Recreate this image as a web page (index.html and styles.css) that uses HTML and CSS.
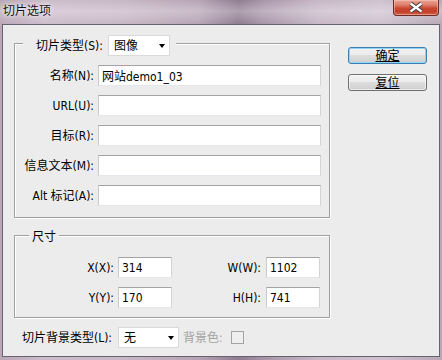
FILE: index.html
```html
<!DOCTYPE html>
<html lang="zh-CN">
<head>
<meta charset="utf-8">
<title>切片选项</title>
<link rel="stylesheet" href="styles.css">
</head>
<body>
<div class="window">
  <div class="titlebar">
    <span class="title">切片选项</span>
    <div class="close">
      <svg width="44" height="15" viewBox="0 0 44 15">
        <path d="M16.5 3.5 L27.5 11.5 M27.5 3.5 L16.5 11.5" stroke="#3b3b44" stroke-width="4.2" fill="none"/>
        <path d="M16.5 3.5 L27.5 11.5 M27.5 3.5 L16.5 11.5" stroke="#ffffff" stroke-width="2.2" fill="none"/>
      </svg>
    </div>
  </div>
  <div class="client">
    <div class="main">
      <div class="group group-slice">
        <div class="legend legend-slice">
          <span>切片类型(S):</span>
          <div class="select sel-type"><span>图像</span><i class="arrow"></i></div>
        </div>
        <div class="form-grid">
          <label class="lbl">名称(N):</label><input class="input" type="text" value="网站demo1_03">
          <label class="lbl">URL(U):</label><input class="input" type="text" value="">
          <label class="lbl">目标(R):</label><input class="input" type="text" value="">
          <label class="lbl">信息文本(M):</label><input class="input" type="text" value="">
          <label class="lbl">Alt 标记(A):</label><input class="input" type="text" value="">
        </div>
      </div>
      <div class="group group-size">
        <div class="legend legend-size">尺寸</div>
        <div class="size-grid">
          <label class="lbl">X(X):</label><input class="input" type="text" value="314">
          <label class="lbl lbl-b">W(W):</label><input class="input" type="text" value="1102">
          <label class="lbl">Y(Y):</label><input class="input" type="text" value="170">
          <label class="lbl lbl-b">H(H):</label><input class="input" type="text" value="741">
        </div>
      </div>
      <div class="bg-row">
        <span class="bg-label">切片背景类型(L):</span>
        <div class="select sel-bg"><span>无</span><i class="arrow"></i></div>
        <span class="disabled">背景色:</span>
        <span class="swatch"></span>
      </div>
    </div>
    <div class="buttons">
      <button class="btn btn-default" type="button">确定</button>
      <button class="btn" type="button">复位</button>
    </div>
  </div>
</div>
</body>
</html>
```
FILE: styles.css
```css
* { box-sizing: border-box; }

html, body {
  margin: 0;
  padding: 0;
}

body {
  width: 442px;
  height: 360px;
  overflow: hidden;
  font-family: "DejaVu Sans Condensed", "DejaVu Sans", "Noto Sans CJK SC", sans-serif;
  font-size: 12px;
  color: #000;
}

.window {
  width: 442px;
  height: 360px;
  display: flex;
  flex-direction: column;
  padding: 0 2px 3px 2px;
  background:
    linear-gradient(to bottom, rgba(255,255,255,0) 0, rgba(255,255,255,0.28) 11px, rgba(255,255,255,0.12) 19px, rgba(255,255,255,0) 24px),
    linear-gradient(to right, #b9a7b7 0%, #cdbccb 10%, #c8b7c6 28%, #b6a4b6 45%, #8f7c91 54%, #a996aa 60%, #c7b7c7 72%, #cfc1cf 86%, #b8a8b8 100%);
}

.titlebar {
  height: 24px;
  flex: none;
  display: flex;
  justify-content: space-between;
  align-items: flex-start;
  padding-left: 1px;
}

.title {
  font-family: "Noto Sans CJK SC", sans-serif;
  font-size: 12px;
  line-height: 16px;
  padding-top: 2px;
  color: #111;
  text-shadow: 0 0 5px rgba(255,255,255,0.95), 0 0 2px rgba(255,255,255,0.8);
}

.close {
  width: 46px;
  height: 16px;
  margin-right: 1px;
  border: 1px solid #6d2c25;
  border-top: none;
  border-radius: 0 0 4px 4px;
  background: linear-gradient(to bottom, #e9a595 0%, #dc7c68 35%, #c9462f 55%, #c2412c 80%, #d7694f 100%);
  box-shadow: inset 0 0 0 1px rgba(255,210,200,0.45);
  display: flex;
  align-items: center;
  justify-content: center;
}

.close svg { display: block; }

.client {
  flex: 1;
  display: flex;
  align-items: flex-start;
  gap: 18px;
  padding: 18px 12px 0 11px;
  border: 1px solid #67626c;
  background: #ececec;
}

.main {
  width: 316px;
  display: flex;
  flex-direction: column;
}

.group {
  border: 1px solid #a0a0a0;
  box-shadow: 1px 1px 0 #fff, inset 1px 1px 0 #fff;
}

.group-slice {
  padding: 0 8px 11px 0;
}

.group-size {
  margin-top: 17px;
  padding: 0 0 9px 0;
}

.legend {
  width: fit-content;
  background: #ececec;
}

.legend-slice {
  margin: -9px 0 9px 8px;
  padding: 0 6px 0 13px;
  display: flex;
  align-items: center;
  gap: 5px;
  line-height: 14px;
}

.legend-size {
  margin: -6px 0 13px 14px;
  padding: 0 3px;
  line-height: 14px;
}

.select {
  height: 21px;
  background: #fff;
  border: 1px solid #dadada;
  display: flex;
  align-items: center;
  justify-content: space-between;
  padding: 0 4px 0 5px;
  line-height: 14px;
}

.sel-type { width: 62px; }
.sel-bg { width: 61px; }

.arrow {
  display: block;
  width: 0;
  height: 0;
  border-left: 3.5px solid transparent;
  border-right: 3.5px solid transparent;
  border-top: 4px solid #000;
  margin-top: 1px;
}

.form-grid {
  display: grid;
  grid-template-columns: 79px 223px;
  column-gap: 4px;
  row-gap: 9px;
  align-items: center;
}

.size-grid {
  display: grid;
  grid-template-columns: 103px 54px 94px 54px;
  row-gap: 9px;
  align-items: center;
}

.lbl {
  text-align: right;
  line-height: 14px;
  white-space: nowrap;
}

.size-grid .lbl { padding-right: 4px; }
.size-grid .lbl-b { padding-right: 5px; }

.input {
  height: 21px;
  width: 100%;
  margin: 0;
  padding: 0 3px;
  font: inherit;
  color: #000;
  background: #fff;
  border: 1px solid;
  border-color: #a3a3a3 #d4d4d4 #e3e6ea #cbcbcb;
  outline: none;
}

.bg-row {
  margin-top: 9px;
  display: flex;
  align-items: center;
  line-height: 14px;
}

.bg-label {
  width: 98px;
  text-align: right;
  white-space: nowrap;
  margin-right: 6px;
}

.disabled {
  color: #a3a3a3;
  margin-left: 4px;
  white-space: nowrap;
}

.swatch {
  width: 13px;
  height: 13px;
  margin-left: 8px;
  border: 1px solid #a4a4a4;
  background: #efefef;
}

.buttons {
  width: 79px;
  margin-top: 4px;
  display: flex;
  flex-direction: column;
  gap: 10px;
}

.btn {
  height: 17px;
  width: 79px;
  margin: 0;
  padding: 0;
  font: inherit;
  line-height: 14px;
  color: #000;
  text-decoration: underline;
  border: 1px solid #707070;
  border-radius: 3px;
  background: linear-gradient(to bottom, #f2f2f2 0%, #ebebeb 45%, #dddddd 50%, #cfcfcf 100%);
  box-shadow: inset 0 0 0 1px rgba(255,255,255,0.6);
}

.btn-default {
  border-color: #3c7fb1;
  box-shadow: inset 0 0 0 1px #8fd3f7;
}
```
